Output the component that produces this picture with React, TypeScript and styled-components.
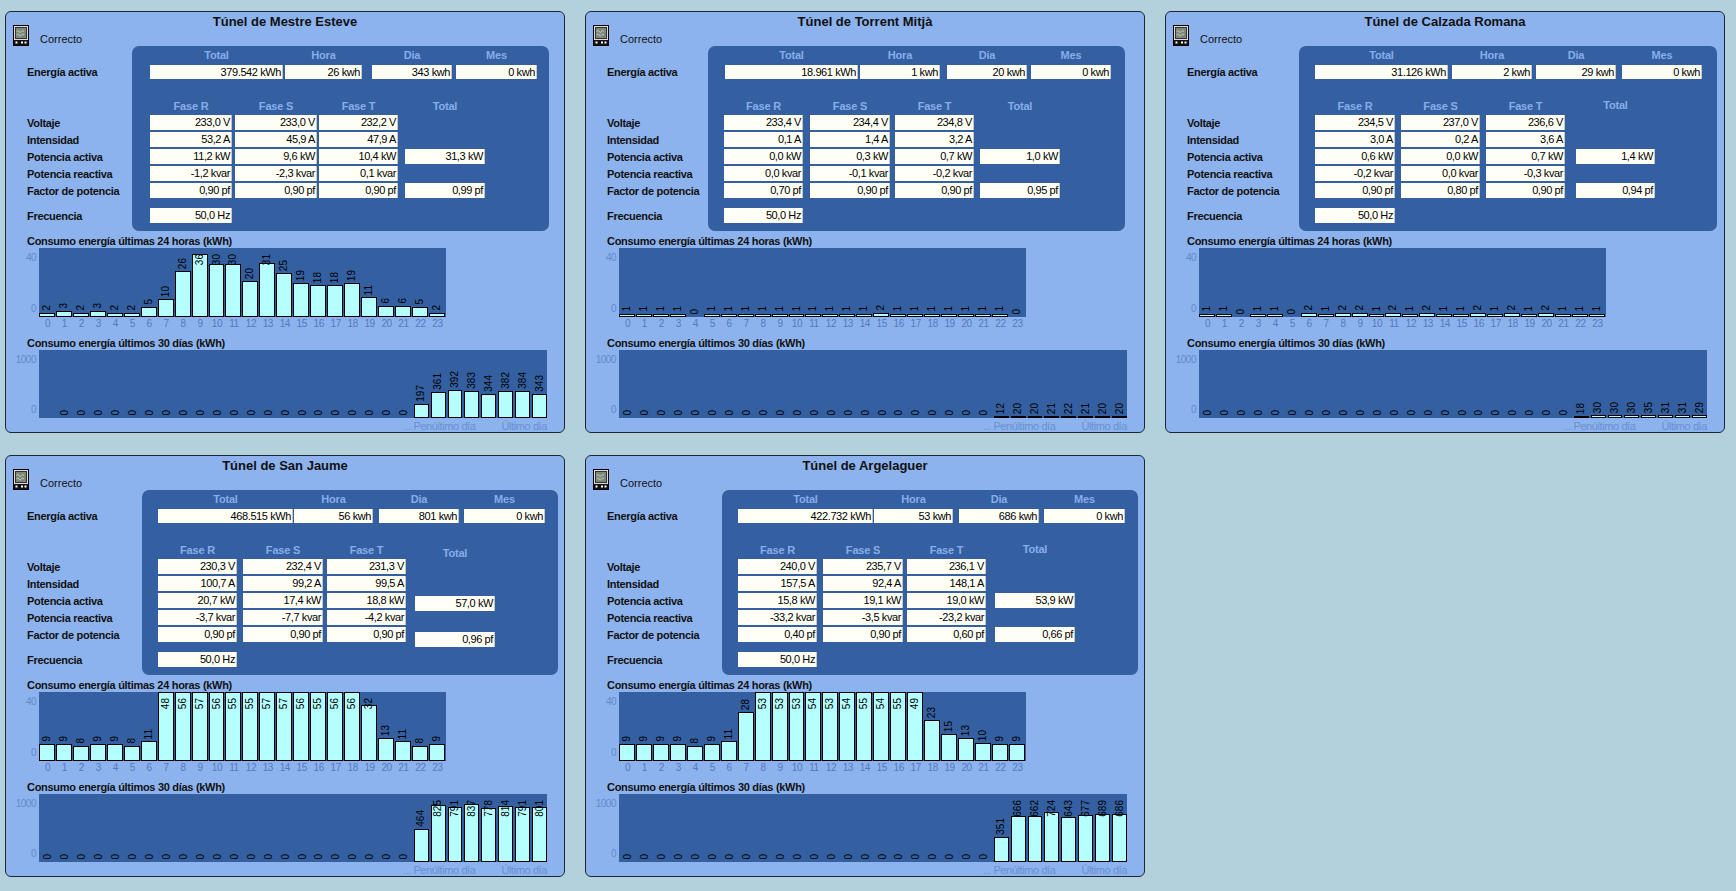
import React from "react";
import styled, { createGlobalStyle } from "styled-components";

type Span = [number, number];

interface PhaseRow {
  label: string;
  values: (string | null)[];
}

interface TunnelData {
  name: string;
  box: Span;
  energyCols: Span[];
  phaseCols: Span[];
  totalDrop?: number[];
  energy: string[];
  rows: PhaseRow[];
  freq: string;
  hourly: number[];
  daily: (number | null)[];
}

const GlobalStyle = createGlobalStyle`
  html, body {
    margin: 0;
    padding: 0;
    background: #b3d1dd;
  }
  body {
    font-family: "Liberation Sans", Arial, sans-serif;
    color: #111;
  }
`;

const Page = styled.div`
  display: grid;
  grid-template-columns: repeat(3, 560px);
  grid-auto-rows: 422px;
  column-gap: 20px;
  row-gap: 22px;
  padding: 11px 0 0 5px;
  min-height: 891px;
  box-sizing: border-box;
`;

const Panel = styled.section`
  box-sizing: border-box;
  height: 422px;
  border: 1px solid #1d2633;
  border-radius: 6px;
  background: #8db3ee;
  display: flex;
  flex-direction: column;
  overflow: hidden;
`;

const Title = styled.h2`
  margin: 3px 0 0;
  font: bold 13px/14px "Liberation Sans", Arial, sans-serif;
  text-align: center;
  color: #111;
`;

const StatusRow = styled.div`
  display: flex;
  align-items: flex-end;
  gap: 11px;
  height: 20px;
  margin: -3px 0 0 7px;
`;

const StatusText = styled.span`
  font-size: 11px;
  line-height: 14px;
  color: #111;
`;

const DataArea = styled.div<{ $labelW: number; $boxW: number }>`
  display: grid;
  grid-template-columns: ${(p) => p.$labelW}px ${(p) => p.$boxW}px;
  grid-template-rows: 17px 18px 16px 17px 17px 17px 17px 17px 17px 26px 6px;
`;

const DarkBox = styled.div`
  grid-column: 2;
  grid-row: 1 / -1;
  background: #3460a1;
  border-radius: 7px;
`;

const RowLabel = styled.div<{ $row: number; $end?: boolean }>`
  grid-column: 1;
  grid-row: ${(p) => p.$row};
  display: flex;
  align-items: ${(p) => (p.$end ? "flex-end" : "center")};
  padding: 0 0 ${(p) => (p.$end ? "3px" : "0")} 21px;
  font-size: 11px;
  font-weight: bold;
  letter-spacing: -0.3px;
  color: #111;
  white-space: nowrap;
`;

const Cells = styled.div<{ $row: number; $end?: boolean }>`
  grid-column: 2;
  grid-row: ${(p) => p.$row};
  display: flex;
  align-items: ${(p) => (p.$end ? "flex-end" : "center")};
  padding-bottom: ${(p) => (p.$end ? "2px" : "0")};
`;

const ValueCell = styled.div<{ $ml: number; $w: number; $h: number; $drop: number }>`
  box-sizing: border-box;
  margin-left: ${(p) => p.$ml}px;
  margin-top: ${(p) => p.$drop * 2}px;
  width: ${(p) => p.$w}px;
  height: ${(p) => p.$h}px;
  line-height: ${(p) => p.$h}px;
  padding: 0 2px;
  text-align: right;
  font-size: 11px;
  letter-spacing: -0.4px;
  color: #000;
  background: #fffff6;
  box-shadow: inset -1px 0 0 #c7c7bd;
  white-space: nowrap;
`;

const HeadCell = styled.div<{ $ml: number; $w: number; $drop: number }>`
  margin-left: ${(p) => p.$ml}px;
  margin-top: ${(p) => p.$drop * 2}px;
  width: ${(p) => p.$w}px;
  text-align: center;
  font-size: 11px;
  font-weight: bold;
  letter-spacing: -0.2px;
  color: #88adeb;
  white-space: nowrap;
`;

const ChartTitle = styled.div<{ $mt: number }>`
  margin: ${(p) => p.$mt}px 0 0 21px;
  font-size: 11px;
  line-height: 14px;
  font-weight: bold;
  letter-spacing: -0.3px;
  color: #111;
`;

const ChartRow = styled.div`
  display: flex;
`;

const YAxis = styled.div`
  width: 33px;
  box-sizing: border-box;
  padding: 4px 3px 3px 0;
  display: flex;
  flex-direction: column;
  justify-content: space-between;
  align-items: flex-end;
  font-size: 10px;
  line-height: 11px;
  letter-spacing: -0.5px;
  color: #6489cb;
`;

const Plot = styled.div<{ $w: number; $h: number }>`
  width: ${(p) => p.$w}px;
  height: ${(p) => p.$h}px;
  background: #3460a1;
  display: flex;
  overflow: hidden;
`;

const Slot = styled.div<{ $side: "left" | "right" }>`
  flex: 1;
  min-width: 0;
  display: flex;
  flex-direction: column;
  justify-content: flex-end;
  align-items: stretch;
  padding-${(p) => p.$side}: ${(p) => (p.$side === "left" ? 2 : 1)}px;
`;

const BarLabel = styled.span`
  position: relative;
  z-index: 1;
  align-self: center;
  writing-mode: vertical-rl;
  transform: rotate(180deg);
  font-size: 10px;
  line-height: 10px;
  color: #000;
`;

const Bar = styled.div`
  box-sizing: border-box;
  border: 1px solid #000;
  background: #b5ffff;
`;

const XAxis = styled.div<{ $w: number }>`
  display: flex;
  margin-left: 33px;
  width: ${(p) => p.$w}px;
  height: 14px;
`;

const XTick = styled.span`
  flex: 1;
  text-align: center;
  font-size: 10px;
  line-height: 14px;
  letter-spacing: -0.4px;
  color: #5579bd;
`;

const Footer = styled.div`
  display: flex;
  justify-content: flex-end;
  gap: 26px;
  width: 541px;
  padding-top: 2px;
  font-size: 11px;
  line-height: 12px;
  letter-spacing: -0.4px;
  color: #6a8fd0;
`;

const DeviceIcon = () => (
  <svg width="16" height="21" viewBox="0 0 16 21">
    <rect x="0.5" y="0.5" width="15" height="20" fill="#dcdcdc" stroke="#000" />
    <rect x="2.5" y="2.5" width="11" height="11" fill="#7b8878" stroke="#333" />
    <path d="M3.5 6.5 q1.25 -2 2.5 0 t2.5 0 t2.5 0" fill="none" stroke="#d6dfcb" strokeWidth="0.8" />
    <path d="M3.5 10 q1.25 -2 2.5 0 t2.5 0 t2.5 0" fill="none" stroke="#d6dfcb" strokeWidth="0.8" />
    <rect x="1" y="15" width="14" height="5" fill="#111" />
    <rect x="2.5" y="16.5" width="2" height="2" fill="#fff" />
    <rect x="8" y="16.5" width="2" height="2" fill="#fff" />
    <rect x="11.5" y="16.5" width="2" height="2" fill="#fff" />
  </svg>
);

// one line of cells inside the dark box; the last column may drop a few px (Total column)
const LineCells = ({
  row,
  cols,
  start,
  items,
  head,
  h = 15,
  end,
  drop = 0,
}: {
  row: number;
  cols: Span[];
  start: number;
  items: (string | null)[];
  head?: boolean;
  h?: number;
  end?: boolean;
  drop?: number;
}) => {
  let prev = start;
  const out: React.ReactNode[] = [];
  cols.forEach(([s, e], i) => {
    const ml = s - prev;
    const v = items[i];
    if (v == null) return;
    prev = e;
    const dr = i === 3 ? drop : 0;
    out.push(
      head ? (
        <HeadCell key={i} $ml={ml} $w={e - s} $drop={dr}>
          {v}
        </HeadCell>
      ) : (
        <ValueCell key={i} $ml={ml} $w={e - s} $h={h} $drop={dr}>
          {v}
        </ValueCell>
      )
    );
  });
  return (
    <Cells $row={row} $end={end}>
      {out}
    </Cells>
  );
};

const BarChart = ({
  values,
  max,
  width,
  height,
  side,
}: {
  values: (number | null)[];
  max: number;
  width: number;
  height: number;
  side: "left" | "right";
}) => {
  const scale = height / max;
  return (
    <Plot $w={width} $h={height}>
      {values.map((v, i) => {
        if (v == null) return <Slot key={i} $side={side} />;
        const barH = v > 0 ? Math.min(height, Math.max(2, Math.round(v * scale) + 1)) : 0;
        const labelLen = String(v).length * 5.6;
        let mb = 2;
        if (barH + 2 + labelLen > height - 6) mb = height - 6 - labelLen - barH;
        return (
          <Slot key={i} $side={side}>
            <BarLabel style={{ marginBottom: mb }}>{v}</BarLabel>
            {barH > 0 && <Bar style={{ height: barH }} />}
          </Slot>
        );
      })}
    </Plot>
  );
};

const TunnelPanel = ({ d }: { d: TunnelData }) => {
  const [boxL, boxR] = d.box;
  const [dHead, dActiva, dFactor] = d.totalDrop ?? [0, 0, 0];
  const rowDrop = [0, 0, dActiva, 0, dFactor];
  return (
    <Panel>
      <Title>{d.name}</Title>
      <StatusRow>
        <DeviceIcon />
        <StatusText>Correcto</StatusText>
      </StatusRow>
      <DataArea $labelW={boxL - 1} $boxW={boxR - boxL}>
        <DarkBox />
        <LineCells row={1} cols={d.energyCols} start={boxL} items={["Total", "Hora", "Dia", "Mes"]} head />
        <RowLabel $row={2}>Energía activa</RowLabel>
        <LineCells row={2} cols={d.energyCols} start={boxL} items={d.energy} h={14} />
        <LineCells
          row={4}
          cols={d.phaseCols}
          start={boxL}
          items={["Fase R", "Fase S", "Fase T", "Total"]}
          head
          drop={dHead}
        />
        {d.rows.map((r, i) => (
          <React.Fragment key={r.label}>
            <RowLabel $row={5 + i}>{r.label}</RowLabel>
            <LineCells row={5 + i} cols={d.phaseCols} start={boxL} items={r.values} drop={rowDrop[i]} />
          </React.Fragment>
        ))}
        <RowLabel $row={10} $end>
          Frecuencia
        </RowLabel>
        <LineCells row={10} cols={d.phaseCols} start={boxL} items={[d.freq]} end />
      </DataArea>

      <ChartTitle $mt={3}>Consumo energía últimas 24 horas (kWh)</ChartTitle>
      <ChartRow>
        <YAxis>
          <span>40</span>
          <span>0</span>
        </YAxis>
        <BarChart values={d.hourly} max={40} width={407} height={69} side="right" />
      </ChartRow>
      <XAxis $w={407}>
        {d.hourly.map((_, i) => (
          <XTick key={i}>{i}</XTick>
        ))}
      </XAxis>

      <ChartTitle $mt={5}>Consumo energía últimos 30 días (kWh)</ChartTitle>
      <ChartRow>
        <YAxis>
          <span>1000</span>
          <span>0</span>
        </YAxis>
        <BarChart values={d.daily} max={1000} width={508} height={68} side="left" />
      </ChartRow>
      <Footer>
        <span>... Penúltimo día</span>
        <span>Último día</span>
      </Footer>
    </Panel>
  );
};

const zeros = (n: number) => Array.from({ length: n }, () => 0);

const colsA: Pick<TunnelData, "box" | "energyCols" | "phaseCols"> = {
  box: [137, 553],
  energyCols: [[153, 288], [289, 368], [374, 454], [459, 540]],
  phaseCols: [[153, 232], [238, 318], [322, 401], [410, 490]],
};

const tunnels: TunnelData[] = [
  {
    name: "Túnel de Mestre Esteve",
    box: [127, 544],
    energyCols: [[145, 278], [280, 357], [367, 447], [451, 532]],
    phaseCols: [[145, 227], [230, 312], [314, 393], [400, 480]],
    energy: ["379.542 kWh", "26 kwh", "343 kwh", "0 kwh"],
    rows: [
      { label: "Voltaje", values: ["233,0 V", "233,0 V", "232,2 V"] },
      { label: "Intensidad", values: ["53,2 A", "45,9 A", "47,9 A"] },
      { label: "Potencia activa", values: ["11,2 kW", "9,6 kW", "10,4 kW", "31,3 kW"] },
      { label: "Potencia reactiva", values: ["-1,2 kvar", "-2,3 kvar", "0,1 kvar"] },
      { label: "Factor de potencia", values: ["0,90 pf", "0,90 pf", "0,90 pf", "0,99 pf"] },
    ],
    freq: "50,0 Hz",
    hourly: [2, 3, 2, 3, 2, 2, 5, 10, 26, 36, 30, 30, 20, 31, 25, 19, 18, 18, 19, 11, 6, 6, 5, 2],
    daily: [null, ...zeros(21), 197, 361, 392, 383, 344, 382, 384, 343],
  },
  {
    name: "Túnel de Torrent Mitjà",
    box: [123, 540],
    energyCols: [[140, 273], [275, 355], [362, 442], [446, 526]],
    phaseCols: [[139, 218], [225, 305], [310, 389], [395, 475]],
    energy: ["18.961 kWh", "1 kwh", "20 kwh", "0 kwh"],
    rows: [
      { label: "Voltaje", values: ["233,4 V", "234,4 V", "234,8 V"] },
      { label: "Intensidad", values: ["0,1 A", "1,4 A", "3,2 A"] },
      { label: "Potencia activa", values: ["0,0 kW", "0,3 kW", "0,7 kW", "1,0 kW"] },
      { label: "Potencia reactiva", values: ["0,0 kvar", "-0,1 kvar", "-0,2 kvar"] },
      { label: "Factor de potencia", values: ["0,70 pf", "0,90 pf", "0,90 pf", "0,95 pf"] },
    ],
    freq: "50,0 Hz",
    hourly: [1, 1, 1, 1, 0, 1, 1, 1, 1, 1, 1, 1, 1, 1, 1, 2, 1, 1, 1, 1, 1, 1, 1, 0],
    daily: [...zeros(22), 12, 20, 20, 21, 22, 21, 20, 20],
  },
  {
    name: "Túnel de Calzada Romana",
    box: [134, 552],
    energyCols: [[150, 283], [287, 367], [371, 451], [457, 537]],
    phaseCols: [[150, 230], [236, 315], [321, 400], [411, 490]],
    totalDrop: [-1, 0, 0],
    energy: ["31.126 kWh", "2 kwh", "29 kwh", "0 kwh"],
    rows: [
      { label: "Voltaje", values: ["234,5 V", "237,0 V", "236,6 V"] },
      { label: "Intensidad", values: ["3,0 A", "0,2 A", "3,6 A"] },
      { label: "Potencia activa", values: ["0,6 kW", "0,0 kW", "0,7 kW", "1,4 kW"] },
      { label: "Potencia reactiva", values: ["-0,2 kvar", "0,0 kvar", "-0,3 kvar"] },
      { label: "Factor de potencia", values: ["0,90 pf", "0,80 pf", "0,90 pf", "0,94 pf"] },
    ],
    freq: "50,0 Hz",
    hourly: [1, 1, 0, 1, 1, 0, 2, 1, 2, 2, 1, 2, 1, 2, 1, 1, 2, 1, 2, 1, 2, 1, 1, 1],
    daily: [...zeros(22), 18, 30, 30, 30, 35, 31, 31, 29],
  },
  {
    name: "Túnel de San Jaume",
    ...colsA,
    totalDrop: [3, 3, 5],
    energy: ["468.515 kWh", "56 kwh", "801 kwh", "0 kwh"],
    rows: [
      { label: "Voltaje", values: ["230,3 V", "232,4 V", "231,3 V"] },
      { label: "Intensidad", values: ["100,7 A", "99,2 A", "99,5 A"] },
      { label: "Potencia activa", values: ["20,7 kW", "17,4 kW", "18,8 kW", "57,0 kW"] },
      { label: "Potencia reactiva", values: ["-3,7 kvar", "-7,7 kvar", "-4,2 kvar"] },
      { label: "Factor de potencia", values: ["0,90 pf", "0,90 pf", "0,90 pf", "0,96 pf"] },
    ],
    freq: "50,0 Hz",
    hourly: [9, 9, 8, 9, 9, 8, 11, 48, 56, 57, 56, 55, 55, 57, 57, 56, 55, 56, 56, 32, 13, 11, 8, 9],
    daily: [...zeros(22), 464, 825, 791, 837, 778, 814, 791, 801],
  },
  {
    name: "Túnel de Argelaguer",
    ...colsA,
    totalDrop: [-1, 0, 0],
    energy: ["422.732 kWh", "53 kwh", "686 kwh", "0 kwh"],
    rows: [
      { label: "Voltaje", values: ["240,0 V", "235,7 V", "236,1 V"] },
      { label: "Intensidad", values: ["157,5 A", "92,4 A", "148,1 A"] },
      { label: "Potencia activa", values: ["15,8 kW", "19,1 kW", "19,0 kW", "53,9 kW"] },
      { label: "Potencia reactiva", values: ["-33,2 kvar", "-3,5 kvar", "-23,2 kvar"] },
      { label: "Factor de potencia", values: ["0,40 pf", "0,90 pf", "0,60 pf", "0,66 pf"] },
    ],
    freq: "50,0 Hz",
    hourly: [9, 9, 9, 9, 8, 9, 11, 28, 53, 53, 53, 54, 53, 54, 55, 54, 55, 49, 23, 15, 13, 10, 9, 9],
    daily: [...zeros(22), 351, 666, 662, 724, 643, 677, 689, 686],
  },
];

export default function App() {
  return (
    <>
      <GlobalStyle />
      <Page>
        {tunnels.map((t) => (
          <TunnelPanel key={t.name} d={t} />
        ))}
      </Page>
    </>
  );
}
